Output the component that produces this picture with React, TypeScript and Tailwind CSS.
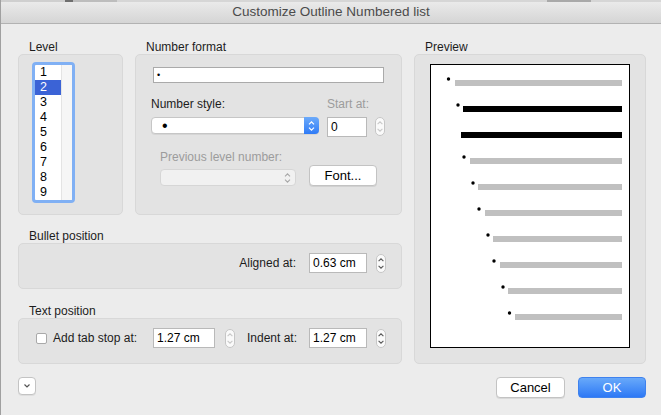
import React from "react";

const FONT = { fontFamily: '"Liberation Sans", Arial, sans-serif' };

function Stepper({ disabled = false }: { disabled?: boolean }) {
  const c = disabled ? "#c9c9c9" : "#5a5a5a";
  return (
    <div className="w-[10px] h-[19px] rounded-[5px] bg-[#fafafa] border border-[#c6c6c6] flex items-center justify-center shrink-0">
      <svg width="8" height="15" viewBox="0 0 8 15">
        <path d="M1.6 5.2 L4 2.8 L6.4 5.2" stroke={c} strokeWidth="1.1" fill="none" />
        <path d="M1.6 9.8 L4 12.2 L6.4 9.8" stroke={c} strokeWidth="1.1" fill="none" />
      </svg>
    </div>
  );
}

function Group({
  label,
  className = "",
  boxClass = "",
  children,
}: {
  label: string;
  className?: string;
  boxClass?: string;
  children?: React.ReactNode;
}) {
  return (
    <div className={"flex flex-col " + className}>
      <div className="h-[14px] leading-[14px] pl-[11px] text-[12px] text-[#1c1c1c] whitespace-nowrap">{label}</div>
      <div className={"bg-[#e3e3e3] border border-[#d8d8d8] rounded-[5px] " + boxClass}>{children}</div>
    </div>
  );
}

function TextInput({ value, w }: { value: string; w: string }) {
  return (
    <div className={"h-[20px] bg-white border border-[#b9b9b9] flex items-center pl-[3px] text-[12px] text-black shrink-0 " + w}>
      {value}
    </div>
  );
}

const levels = ["1", "2", "3", "4", "5", "6", "7", "8", "9"];

const previewRows = [
  { b: 448.5, x: 455, dark: false },
  { b: 458, x: 463, dark: true },
  { b: null, x: 461, dark: true },
  { b: 464, x: 470, dark: false },
  { b: 473, x: 478, dark: false },
  { b: 479, x: 485, dark: false },
  { b: 488, x: 493, dark: false },
  { b: 494, x: 500, dark: false },
  { b: 503, x: 508, dark: false },
  { b: 509.5, x: 515, dark: false },
];

export default function App() {
  return (
    <div
      className="w-[661px] h-[415px] bg-[#ececec] border-l border-[#a0a0a0] overflow-hidden flex flex-col"
      style={FONT}
    >
      {/* windows behind, peeking above */}
      <div className="h-[2px] flex bg-[#d6d6d6] shrink-0">
        <div className="w-[64px] bg-[#cfcfcf]" />
        <div className="w-[8px] bg-[#6e6e6e]" />
        <div className="w-[44px] bg-[#bdbdbd]" />
        <div className="w-[430px]" />
        <div className="w-[44px] bg-[#a9a9a9]" />
      </div>
      {/* title bar */}
      <div className="h-[22px] shrink-0 bg-gradient-to-b from-[#eaeaea] to-[#d5d5d5] border-b border-[#b2b2b2] flex items-center justify-center text-[13.5px] text-[#4b4b4b]">
        Customize Outline Numbered list
      </div>

      {/* body */}
      <div className="flex gap-[12px] pl-[17px] pr-[15px] pt-[16px]">
        {/* left column */}
        <div className="w-[384px] flex flex-col">
          <div className="flex gap-[12px]">
            <Group label="Level" className="w-[105px]" boxClass="h-[161px] pt-[7px] pl-[13px]">
              <div className="w-[43px] h-[141px] rounded-[4px] border-[3px] border-[#80b0f4] bg-white flex overflow-hidden">
                <div className="w-[26px] flex flex-col">
                  {levels.map((l) => (
                    <div
                      key={l}
                      className={
                        "h-[15px] leading-[15px] pl-[5px] text-[12.5px] " +
                        (l === "2" ? "bg-[#3b63d6] text-white" : "text-black")
                      }
                    >
                      {l}
                    </div>
                  ))}
                </div>
                <div className="flex-1 bg-[#f6f6f6] border-l border-[#e4e4e4]" />
              </div>
            </Group>

            <Group label="Number format" className="w-[267px]" boxClass="h-[161px] pt-[12px]">
              <div className="ml-[17px] w-[231px] h-[16px] bg-white border border-[#aaaaaa] flex items-center pl-[3px] text-[9px] leading-none text-black">
                •
              </div>

              <div className="flex mt-[14px]">
                <div className="ml-[15px] w-[168px] flex flex-col">
                  <div className="h-[14px] leading-[14px] text-[12px] text-[#1c1c1c]">Number style:</div>
                  <div className="mt-[6px] h-[17px] bg-white rounded-[4px] border border-[#c6c6c6] flex shadow-[0_1px_0_rgba(0,0,0,0.06)]">
                    <div className="flex-1 flex items-center pl-[10px] text-[16px] leading-none text-black">•</div>
                    <div className="w-[15px] -my-px -mr-px rounded-r-[4px] bg-gradient-to-b from-[#6caafa] to-[#2f7bf6] flex items-center justify-center">
                      <svg width="7" height="12" viewBox="0 0 7 12">
                        <path d="M1 4.3 L3.5 1.8 L6 4.3" stroke="white" strokeWidth="1.2" fill="none" />
                        <path d="M1 7.7 L3.5 10.2 L6 7.7" stroke="white" strokeWidth="1.2" fill="none" />
                      </svg>
                    </div>
                  </div>
                </div>
                <div className="ml-[8px] flex flex-col">
                  <div className="h-[14px] leading-[14px] text-[12px] text-[#9c9c9c]">Start at:</div>
                  <div className="mt-[6px] flex items-start">
                    <TextInput value="0" w="w-[40px]" />
                    <div className="ml-[8px]">
                      <Stepper disabled />
                    </div>
                  </div>
                </div>
              </div>

              <div className="ml-[24px] mt-[13px] h-[14px] leading-[14px] text-[12px] text-[#9c9c9c]">
                Previous level number:
              </div>
              <div className="ml-[24px] mt-[1px] flex items-end">
                <div className="w-[136px] h-[17px] bg-[#f1f1f1] rounded-[4px] border border-[#d6d6d6] flex items-center justify-end pr-[4px]">
                  <svg width="7" height="12" viewBox="0 0 7 12">
                    <path d="M1 4.3 L3.5 1.8 L6 4.3" stroke="#a8a8a8" strokeWidth="1.1" fill="none" />
                    <path d="M1 7.7 L3.5 10.2 L6 7.7" stroke="#a8a8a8" strokeWidth="1.1" fill="none" />
                  </svg>
                </div>
                <div className="ml-[13px] w-[68px] h-[21px] bg-white rounded-[4px] border border-[#c3c3c3] shadow-[0_1px_0_rgba(0,0,0,0.08)] flex items-center justify-center text-[13px] text-black">
                  Font...
                </div>
              </div>
            </Group>
          </div>

          <Group label="Bullet position" className="mt-[14px]" boxClass="h-[46px] pt-[9px] pr-[15px]">
            <div className="flex items-center justify-end h-[20px]">
              <div className="text-[12px] text-[#1c1c1c] whitespace-nowrap">Aligned at:</div>
              <div className="ml-[13px]">
                <TextInput value="0.63 cm" w="w-[58px]" />
              </div>
              <div className="ml-[9px]">
                <Stepper />
              </div>
            </div>
          </Group>

          <Group label="Text position" className="mt-[15px]" boxClass="h-[46px] pt-[9px] pl-[17px]">
            <div className="flex items-center h-[20px]">
              <div className="w-[11px] h-[11px] bg-white rounded-[2px] border border-[#a9a9a9] shrink-0" />
              <div className="ml-[6px] w-[84px] text-[12px] text-[#1c1c1c] whitespace-nowrap">Add tab stop at:</div>
              <div className="ml-[16px]">
                <TextInput value="1.27 cm" w="w-[62px]" />
              </div>
              <div className="ml-[10px]">
                <Stepper disabled />
              </div>
              <div className="ml-[12px] w-[49px] text-[12px] text-[#1c1c1c] whitespace-nowrap">Indent at:</div>
              <div className="ml-[13px]">
                <TextInput value="1.27 cm" w="w-[58px]" />
              </div>
              <div className="ml-[9px]">
                <Stepper />
              </div>
            </div>
          </Group>
        </div>

        {/* preview */}
        <Group label="Preview" className="w-[232px]" boxClass="flex-1 pt-[9px] pl-[15px]">
          <div className="w-[200px] h-[284px] bg-white border border-black">
            <svg width="198" height="282" viewBox="0 0 198 282">
              {previewRows.map((r, i) => {
                const y = 15 + 26 * i;
                return (
                  <g key={i}>
                    <rect
                      x={r.x - 431}
                      y={y}
                      width={622 - r.x}
                      height={6}
                      fill={r.dark ? "#000000" : "#c0c0c0"}
                    />
                    {r.b !== null && <circle cx={r.b - 431} cy={y - 1} r={1.7} fill="#000" />}
                  </g>
                );
              })}
            </svg>
          </div>
        </Group>
      </div>

      {/* bottom buttons */}
      <div className="flex items-start pl-[17px] pr-[15px] mt-[13px]">
        <div className="w-[18px] h-[18px] bg-white rounded-[4px] border border-[#c3c3c3] shadow-[0_1px_0_rgba(0,0,0,0.06)] flex items-center justify-center">
          <svg width="8" height="6" viewBox="0 0 8 6">
            <path d="M1.5 1.5 L4 4 L6.5 1.5" stroke="#555" strokeWidth="1.2" fill="none" />
          </svg>
        </div>
        <div className="flex-1" />
        <div className="w-[69px] h-[21px] bg-white rounded-[4px] border border-[#c3c3c3] shadow-[0_1px_0_rgba(0,0,0,0.08)] flex items-center justify-center text-[13px] text-black">
          Cancel
        </div>
        <div className="ml-[13px] w-[68px] h-[21px] rounded-[4px] bg-gradient-to-b from-[#68a9fa] to-[#2d78f5] border border-[#3f82ee] flex items-center justify-center text-[13px] text-white">
          OK
        </div>
      </div>
    </div>
  );
}
